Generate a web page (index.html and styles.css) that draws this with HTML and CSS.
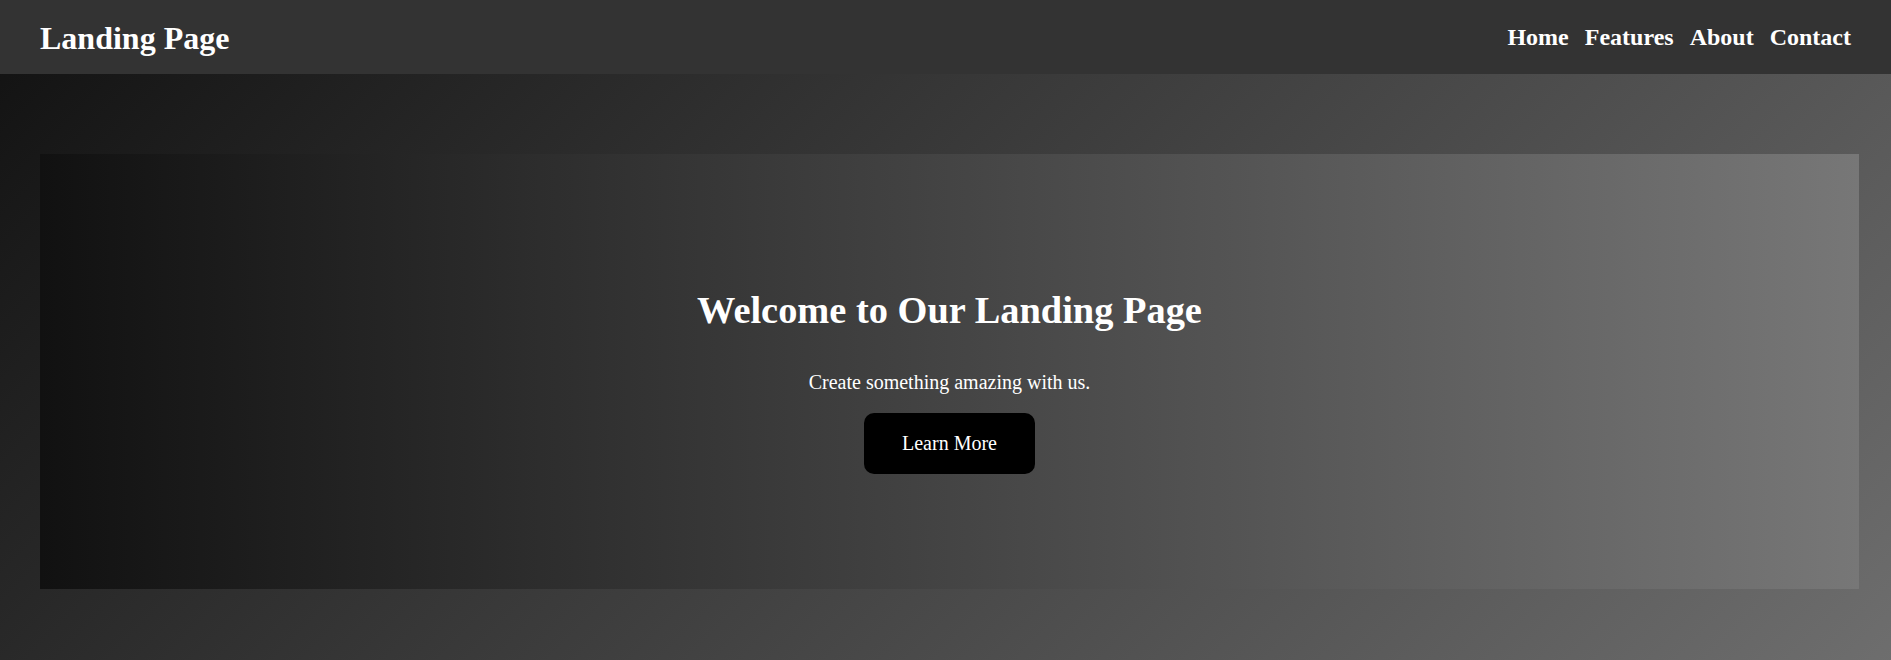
FILE: index.html
```html
<!DOCTYPE html>
<html lang="en">
<head>
<meta charset="utf-8">
<title>Landing Page</title>
<link rel="stylesheet" href="styles.css">
</head>
<body>
<header class="site-header">
  <div class="logo">Landing Page</div>
  <nav class="nav">
    <a href="#" class="nav-link">Home</a>
    <a href="#" class="nav-link">Features</a>
    <a href="#" class="nav-link">About</a>
    <a href="#" class="nav-link">Contact</a>
  </nav>
</header>
<main class="main">
  <section class="hero">
    <h1 class="hero-title">Welcome to Our Landing Page</h1>
    <p class="hero-text">Create something amazing with us.</p>
    <a href="#" class="hero-button">Learn More</a>
  </section>
</main>
</body>
</html>
```
FILE: styles.css
```css
html, body {
  margin: 0;
  padding: 0;
}
body {
  font-family: "Liberation Serif", "Times New Roman", serif;
  color: #fff;
  min-height: 660px;
  background: linear-gradient(135deg, #111111 0%, #6e6e6e 100%);
}
.site-header {
  height: 74px;
  box-sizing: border-box;
  padding: 0 40px;
  background: #333333;
  display: flex;
  align-items: center;
  justify-content: space-between;
}
.logo {
  font-size: 32px;
  font-weight: bold;
  line-height: 1;
  margin-top: 2px;
}
.nav {
  display: flex;
  gap: 16px;
}
.nav-link {
  color: #fff;
  text-decoration: none;
  font-weight: bold;
  font-size: 24px;
}
.main {
  padding: 80px 32px 80px 40px;
}
.hero {
  height: 435px;
  box-sizing: border-box;
  padding: 134px 0 0;
  background: linear-gradient(to right, #111111, #777777);
  display: flex;
  flex-direction: column;
  align-items: center;
  text-align: center;
}
.hero-title {
  margin: 0;
  font-size: 38.4px;
  font-weight: bold;
}
.hero-text {
  margin: 39px 0 0;
  font-size: 20px;
}
.hero-button {
  margin-top: 19px;
  display: inline-block;
  background: #000;
  color: #fff;
  text-decoration: none;
  font-size: 20px;
  padding: 19px 38px;
  border-radius: 10px;
}
```
